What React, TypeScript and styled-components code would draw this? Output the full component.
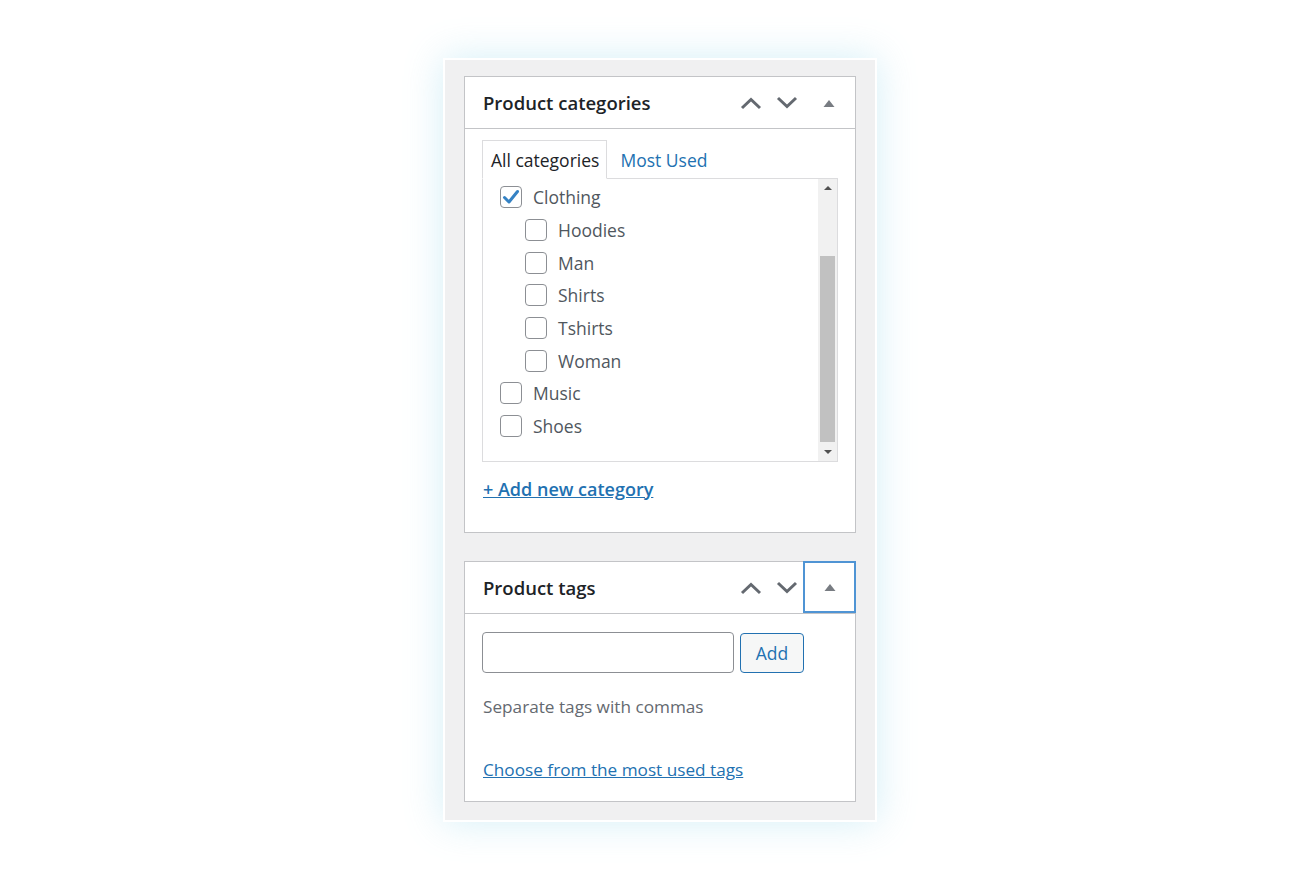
import React from 'react';
import { createGlobalStyle, styled } from 'styled-components';

const GlobalStyle = createGlobalStyle`
  html, body {
    margin: 0;
    padding: 0;
    background: #ffffff;
  }
  body {
    font-family: "Open Sans", "Noto Sans", sans-serif;
    color: #3c434a;
  }
`;

const Page = styled.div`
  width: 1300px;
  height: 878px;
  display: flex;
  justify-content: center;
  align-items: flex-start;
  padding-top: 58px;
  box-sizing: border-box;
`;

const Frame = styled.div`
  width: 434px;
  box-sizing: border-box;
  margin-left: 20px;
  background: #f0f0f1;
  border: 2px solid #ffffff;
  padding: 16px 19px 18px;
  display: flex;
  flex-direction: column;
  gap: 28px;
  box-shadow: 0 0 36px rgba(120, 205, 230, 0.32);
`;

const Panel = styled.div`
  background: #ffffff;
  border: 1px solid #c3c4c7;
  box-sizing: border-box;
  width: 392px;
`;

const Header = styled.div`
  height: 51px;
  display: flex;
  align-items: center;
  border-bottom: 1px solid #c3c4c7;
`;

const Title = styled.h2`
  flex: 1;
  margin: 0;
  padding-left: 18px;
  font-size: 18.5px;
  font-weight: 600;
  color: #1d2327;
`;

const Actions = styled.div`
  display: flex;
  height: 100%;
  align-items: stretch;
`;

const OrderButton = styled.button`
  width: 36px;
  border: 0;
  background: transparent;
  padding: 0 0 0 4px;
  display: flex;
  align-items: center;
  justify-content: center;
  color: #646970;
  cursor: pointer;
`;

const ToggleButton = styled.button<{ $focused?: boolean }>`
  border: 0;
  background: transparent;
  padding: 0;
  display: flex;
  align-items: center;
  justify-content: center;
  color: #787c82;
  margin: ${(p) => (p.$focused ? '-1px -1px 0 0' : '0')};
  width: ${(p) => (p.$focused ? '53px' : '52px')};
  box-shadow: ${(p) => (p.$focused ? 'inset 0 0 0 2px #4f94d4' : 'none')};
`;

const Body = styled.div<{ $bottom: number }>`
  padding: 10px 17px ${(p) => p.$bottom}px;
`;

const Tabs = styled.div`
  display: flex;
  align-items: flex-end;
  height: 39px;
`;

const Tab = styled.div<{ $active?: boolean }>`
  height: ${(p) => (p.$active ? '39px' : '38px')};
  box-sizing: border-box;
  display: flex;
  align-items: center;
  font-size: 17.5px;
  padding-left: ${(p) => (p.$active ? '8px' : '12px')};
  padding-right: 7px;
  margin-bottom: ${(p) => (p.$active ? '-1px' : '0')};
  border: 1px solid ${(p) => (p.$active ? '#dcdcde' : 'transparent')};
  border-bottom: ${(p) => (p.$active ? '1px solid #ffffff' : '0')};
  background: #ffffff;
  color: ${(p) => (p.$active ? '#1d2327' : '#2271b1')};
  position: relative;
  z-index: 1;
`;

const TabPanel = styled.div`
  height: 284px;
  box-sizing: border-box;
  border: 1px solid #dcdcde;
  display: flex;
`;

const List = styled.ul`
  flex: 1;
  list-style: none;
  margin: 0;
  padding: 2px 0 0 17px;
`;

const Row = styled.li<{ $level: number }>`
  height: 32.7px;
  display: flex;
  align-items: center;
  gap: 11px;
  padding-left: ${(p) => p.$level * 25}px;
  font-size: 17.5px;
  color: #50575e;
`;

const Box = styled.span`
  width: 22px;
  height: 22px;
  box-sizing: border-box;
  border: 1px solid #8c8f94;
  border-radius: 4px;
  background: #ffffff;
  display: flex;
  align-items: center;
  justify-content: center;
  flex-shrink: 0;
`;

const Scrollbar = styled.div`
  width: 19px;
  background: #f1f1f1;
  display: flex;
  flex-direction: column;
  align-items: center;
`;

const ScrollArrow = styled.div<{ $down?: boolean }>`
  height: ${(p) => (p.$down ? '19px' : '17px')};
  width: 100%;
  display: flex;
  align-items: center;
  justify-content: center;
  &::after {
    content: '';
    border-left: 4px solid transparent;
    border-right: 4px solid transparent;
    ${(p) =>
      p.$down ? 'border-top: 4px solid #505050;' : 'border-bottom: 4px solid #505050;'}
  }
`;

const Track = styled.div`
  flex: 1;
  width: 100%;
  display: flex;
  flex-direction: column;
  align-items: center;
  justify-content: flex-end;
`;

const Thumb = styled.div`
  width: 15px;
  height: 186px;
  background: #c1c1c1;
`;

const BoldLink = styled.a`
  display: inline-block;
  margin-top: 17px;
  margin-left: 1px;
  font-size: 18px;
  font-weight: 600;
  color: #2271b1;
  text-decoration: underline;
  line-height: 20px;
`;

const TagRow = styled.div`
  display: flex;
  align-items: center;
  gap: 6px;
  padding-top: 8px;
`;

const TagInput = styled.input`
  width: 252px;
  height: 41px;
  box-sizing: border-box;
  border: 1px solid #8c8f94;
  border-radius: 4px;
  background: #ffffff;
  padding: 0 10px;
  font: inherit;
  outline: none;
`;

const AddButton = styled.button`
  width: 64px;
  height: 40px;
  box-sizing: border-box;
  border: 1px solid #2271b1;
  border-radius: 4px;
  background: #f6f7f7;
  color: #2271b1;
  font-family: "Open Sans", "Noto Sans", sans-serif;
  font-size: 17.5px;
  padding: 0;
`;

const Hint = styled.p`
  margin: 22px 0 0 1px;
  font-size: 17.2px;
  color: #646970;
  line-height: 24px;
`;

const PlainLink = styled.a`
  display: inline-block;
  margin-top: 39px;
  margin-left: 1px;
  font-size: 17.2px;
  color: #2271b1;
  text-decoration: underline;
  line-height: 24px;
`;

function ChevronUp() {
  return (
    <svg width="22" height="14" viewBox="0 0 22 14">
      <path d="M2 12 L11 3.5 L20 12" fill="none" stroke="currentColor" strokeWidth="3" />
    </svg>
  );
}

function ChevronDown() {
  return (
    <svg width="22" height="14" viewBox="0 0 22 14">
      <path d="M2 2 L11 10.5 L20 2" fill="none" stroke="currentColor" strokeWidth="3" />
    </svg>
  );
}

function Caret() {
  return (
    <svg width="12" height="8" viewBox="0 0 12 8">
      <path d="M0.5 8 L6 1 L11.5 8 Z" fill="currentColor" />
    </svg>
  );
}

function Check() {
  return (
    <svg width="18" height="16" viewBox="0 0 18 16">
      <path d="M2.5 8.5 L7 13 L15.5 2.5" fill="none" stroke="#3582c4" strokeWidth="3" strokeLinecap="round" strokeLinejoin="round" />
    </svg>
  );
}

function PanelHeader({ title, focused }: { title: string; focused?: boolean }) {
  return (
    <Header>
      <Title>{title}</Title>
      <Actions>
        <OrderButton aria-label="Move up">
          <ChevronUp />
        </OrderButton>
        <OrderButton aria-label="Move down">
          <ChevronDown />
        </OrderButton>
        <ToggleButton $focused={focused} aria-label="Toggle panel">
          <Caret />
        </ToggleButton>
      </Actions>
    </Header>
  );
}

const categories = [
  { name: 'Clothing', level: 0, checked: true },
  { name: 'Hoodies', level: 1 },
  { name: 'Man', level: 1 },
  { name: 'Shirts', level: 1 },
  { name: 'Tshirts', level: 1 },
  { name: 'Woman', level: 1 },
  { name: 'Music', level: 0 },
  { name: 'Shoes', level: 0 },
];

export default function App() {
  return (
    <>
      <GlobalStyle />
      <Page>
        <Frame>
          <Panel>
            <PanelHeader title="Product categories" />
            <Body $bottom={31}>
              <Tabs>
                <Tab $active>All categories</Tab>
                <Tab>Most Used</Tab>
              </Tabs>
              <TabPanel>
                <List>
                  {categories.map((c) => (
                    <Row key={c.name} $level={c.level}>
                      <Box>{c.checked && <Check />}</Box>
                      {c.name}
                    </Row>
                  ))}
                </List>
                <Scrollbar>
                  <ScrollArrow />
                  <Track>
                    <Thumb />
                  </Track>
                  <ScrollArrow $down />
                </Scrollbar>
              </TabPanel>
              <BoldLink href="#">+ Add new category</BoldLink>
            </Body>
          </Panel>
          <Panel>
            <PanelHeader title="Product tags" focused />
            <Body $bottom={19}>
              <TagRow>
                <TagInput type="text" />
                <AddButton>Add</AddButton>
              </TagRow>
              <Hint>Separate tags with commas</Hint>
              <PlainLink href="#">Choose from the most used tags</PlainLink>
            </Body>
          </Panel>
        </Frame>
      </Page>
    </>
  );
}
